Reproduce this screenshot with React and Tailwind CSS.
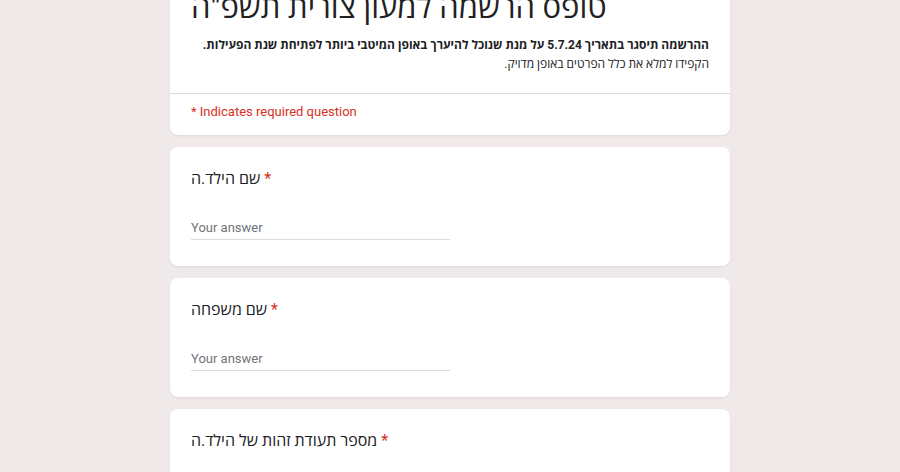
export default function App() {
  const questions = [
    { title: "שם הילד.ה", input: true },
    { title: "שם משפחה", input: true },
    { title: "מספר תעודת זהות של הילד.ה", input: true },
  ];

  return (
    <div className="min-h-screen bg-[#f0e9e9] overflow-hidden" style={{ height: 472 }}>
      <div className="w-[560px] mx-auto -mt-[12px] flex flex-col gap-3 font-['Roboto','Open_Sans','DejaVu_Sans',sans-serif] text-[#202124]">
        <div className="bg-white rounded-b-lg shadow-[0_1px_2px_rgba(0,0,0,0.08)]">
          <div className="px-[21px] pb-[20px]">
            <h1 className="text-[31px] leading-[40px] font-normal">
              טופס הרשמה למעון צורית תשפ"ה
            </h1>
            <div dir="rtl" className="mt-2 text-[12px] leading-[18px] text-right">
              <p className="font-bold">
                ההרשמה תיסגר בתאריך 5.7.24 על מנת שנוכל להיערך באופן המיטבי ביותר לפתיחת שנת הפעילות.
              </p>
              <p className="mt-px">הקפידו למלא את כלל הפרטים באופן מדויק.</p>
            </div>
          </div>
          <div className="border-t border-[#dadce0] px-[21px] pt-[9px] pb-[14px] text-[13px] leading-[18px] text-[#d93025]">
            * Indicates required question
          </div>
        </div>

        {questions.map((q) => (
          <div
            key={q.title}
            className="bg-white rounded-lg shadow-[0_1px_2px_rgba(0,0,0,0.08)] px-[21px] pt-[20px] pb-[26px]"
          >
            <div className="text-[16px] leading-[24px]">
              {q.title} <span className="text-[#d93025]">*</span>
            </div>
            {q.input && (
              <div className="mt-[28px] w-[259px] border-b border-[#dadce0] pb-[2px] text-[13px] leading-[18px] text-[#70757a]">
                Your answer
              </div>
            )}
          </div>
        ))}
      </div>
    </div>
  );
}
